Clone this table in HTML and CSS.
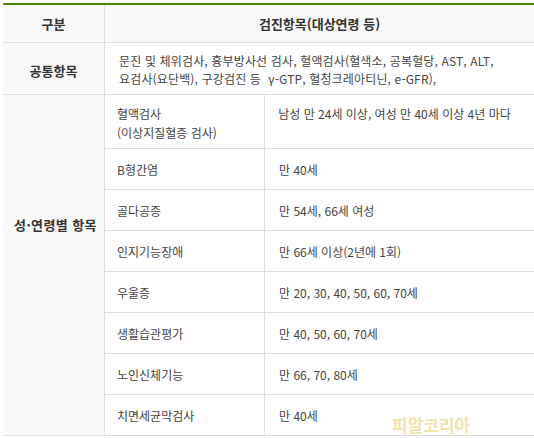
FILE: index.html
```html
<!DOCTYPE html>
<html lang="ko">
<head>
<meta charset="utf-8">
<link rel="stylesheet" href="styles.css">
</head>
<body>
<div class="wrap">
  <div class="table">
    <div class="cell head c1">구분</div>
    <div class="cell head span2">검진항목(대상연령 등)</div>

    <div class="cell side c1 common">공통항목</div>
    <div class="cell span2 common-text">문진 및 체위검사, 흉부방사선 검사, 혈액검사(혈색소, 공복혈당, AST, ALT,<br>요검사(요단백), 구강검진 등&nbsp; γ-GTP, 혈청크레아티닌, e-GFR),</div>

    <div class="cell side c1 age"><span>성·연령별 항목</span></div>

    <div class="cell item tall">혈액검사<br>(이상지질혈증 검사)</div>
    <div class="cell val tall center">남성 만 24세 이상, 여성 만 40세 이상 4년 마다<br>&nbsp;</div>

    <div class="cell item">B형간염</div>
    <div class="cell val">만 40세</div>

    <div class="cell item">골다공증</div>
    <div class="cell val">만 54세, 66세 여성</div>

    <div class="cell item">인지기능장애</div>
    <div class="cell val">만 66세 이상(2년에 1회)</div>

    <div class="cell item">우울증</div>
    <div class="cell val">만 20, 30, 40, 50, 60, 70세</div>

    <div class="cell item">생활습관평가</div>
    <div class="cell val">만 40, 50, 60, 70세</div>

    <div class="cell item">노인신체기능</div>
    <div class="cell val">만 66, 70, 80세</div>

    <div class="cell item">치면세균막검사</div>
    <div class="cell val">만 40세</div>
  </div>
  <div class="watermark">피알코리아</div>
</div>
</body>
</html>
```

FILE: styles.css
```css
html, body {
  margin: 0;
  padding: 0;
  background: #ffffff;
}
body {
  padding: 3px 0 0 3px;
  font-family: "Noto Sans CJK KR", "Noto Sans", sans-serif;
  font-size: 12px;
  color: #444444;
}
.wrap {
  position: relative;
  width: 531px;
}
.table {
  display: grid;
  grid-template-columns: 102px 160px 269px;
  grid-template-rows: 38px 52px 54px repeat(7, 41px);
  border-top: 2px solid #478a06;
}
.cell {
  box-sizing: border-box;
  border-bottom: 1px solid #dddddd;
  display: flex;
  align-items: center;
  line-height: 18px;
}
.c1 {
  grid-column: 1;
  border-right: 1px solid #dddddd;
  justify-content: center;
}
.span2 {
  grid-column: 2 / span 2;
}
.head {
  background: #f9f9f9;
  font-weight: bold;
  font-size: 13px;
  color: #333333;
  justify-content: center;
}
.side {
  background: #f9f9f9;
  font-weight: bold;
  font-size: 13px;
  color: #333333;
}
.common {
  padding-top: 4px;
}
.common-text {
  padding: 3px 0 0 14px;
  line-height: 18px;
  letter-spacing: 0.15px;
}
.age {
  grid-row: 3 / span 8;
  padding: 0 0 80px 4px;
  letter-spacing: 0.4px;
}
.item {
  grid-column: 2;
  border-right: 1px solid #dddddd;
  padding: 2px 0 0 12px;
}
.tall {
  line-height: 19px;
}
.val {
  grid-column: 3;
  padding: 2px 0 0 14px;
}
.val.center {
  justify-content: center;
  text-align: center;
  padding-left: 0;
  padding-right: 10px;
}
.watermark {
  position: absolute;
  left: 389px;
  top: 409px;
  font-size: 17px;
  font-weight: bold;
  color: #f2e3a8;
}
```
